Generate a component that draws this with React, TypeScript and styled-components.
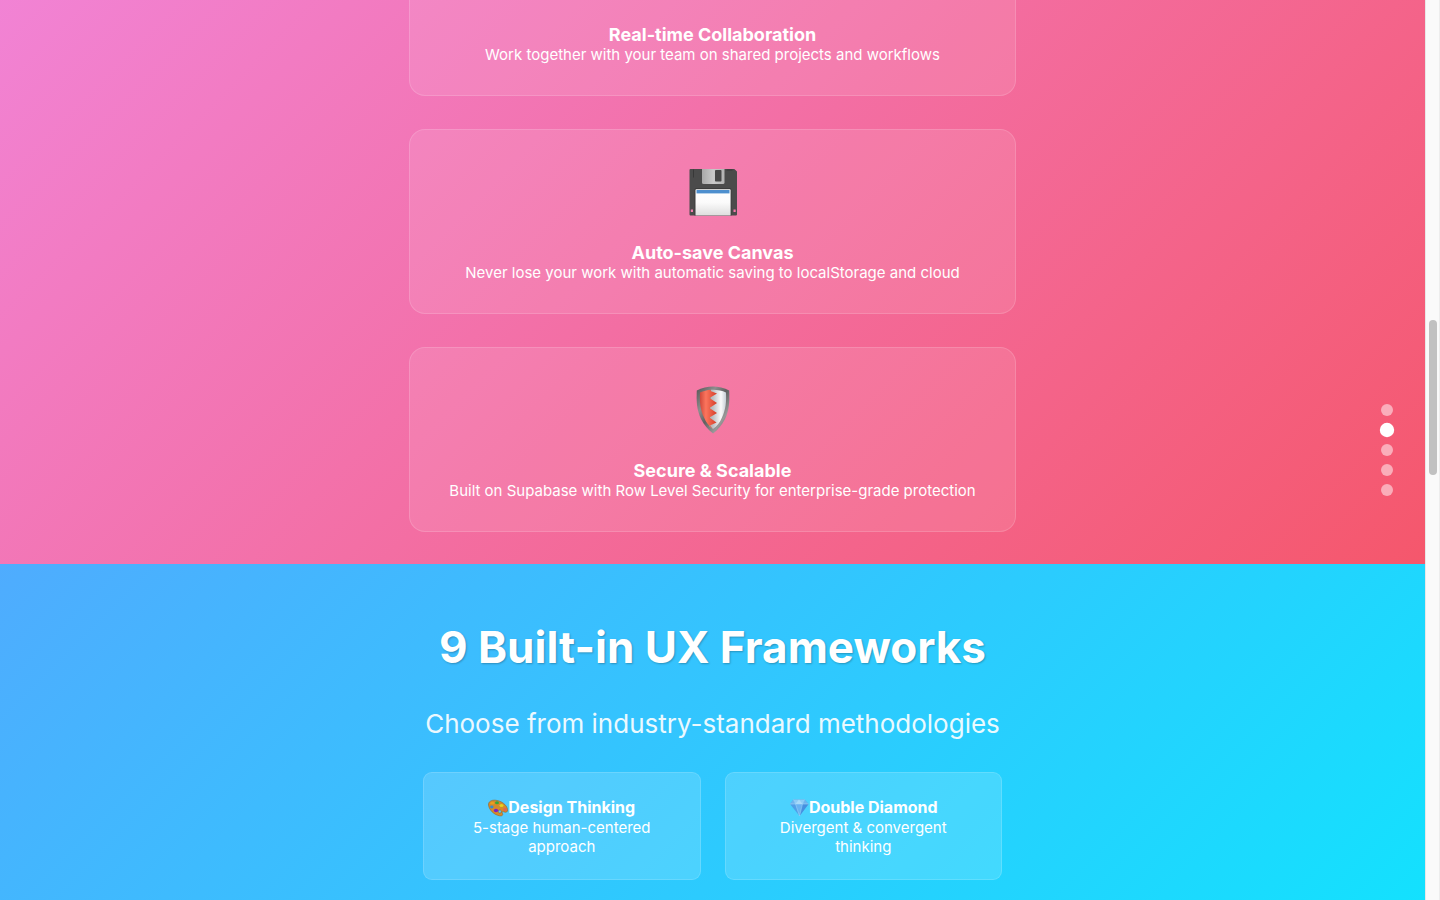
import React from "react";
import styled, { createGlobalStyle } from "styled-components";

const GlobalStyle = createGlobalStyle`
  *, *::before, *::after { box-sizing: border-box; }
  body {
    margin: 0;
    font-family: Inter, "Liberation Sans", sans-serif;
    font-size: 15px;
    color: #fff;
  }
  h2, h3, p { margin: 0; }
`;

const Page = styled.div`
  display: flex;
  min-height: 100vh;
`;

const Main = styled.main`
  flex: 1;
  min-width: 0;
  display: flex;
  flex-direction: column;
`;

const Features = styled.section`
  display: flex;
  flex-direction: column;
  align-items: center;
  gap: 33px;
  padding: 0 32px 32px;
  background: linear-gradient(135deg, #f093fb 0%, #f5576c 100%) bottom / 100% 1298px no-repeat;
`;

const FeatureCard = styled.article<{ $continued?: boolean }>`
  width: 100%;
  max-width: 607px;
  padding: ${(p) => (p.$continued ? "24px 32px 31px" : "32px 32px 31px")};
  text-align: center;
  background: rgba(255, 255, 255, 0.1);
  border: 1px solid rgba(255, 255, 255, 0.15);
  border-radius: 16px;
  ${(p) => p.$continued && "border-top: 0; border-radius: 0 0 16px 16px;"}
`;

const FeatureIcon = styled.div`
  display: flex;
  align-items: center;
  justify-content: center;
  height: 60px;
  margin-bottom: 20px;
`;

const FeatureTitle = styled.h3`
  font-size: 18px;
  line-height: 21px;
  font-weight: 700;
`;

const Text = styled.p`
  font-size: 15px;
  line-height: 19px;
`;

const Frameworks = styled.section`
  flex: 1;
  display: flex;
  flex-direction: column;
  align-items: center;
  padding: 54px 32px 20px;
  background: linear-gradient(135deg, #4facfe 0%, #00f2fe 100%) top / 100% 900px no-repeat;
`;

const Heading = styled.h2`
  font-size: 44px;
  line-height: 58px;
  font-weight: 700;
  text-align: center;
  text-shadow: 1px 1px 2px rgba(0, 0, 0, 0.25);
`;

const Lead = styled.p`
  margin-top: 30px;
  font-size: 26px;
  line-height: 36px;
  text-align: center;
  opacity: 0.9;
`;

const FrameworkGrid = styled.div`
  display: grid;
  grid-template-columns: 1fr 1fr;
  gap: 24px;
  width: 100%;
  max-width: 579px;
  margin-top: 30px;
`;

const FrameworkCard = styled.article`
  padding: 24px 32px 23px;
  text-align: center;
  background: rgba(255, 255, 255, 0.15);
  border: 1px solid rgba(255, 255, 255, 0.15);
  border-radius: 9px;
`;

const FrameworkTitle = styled.h3`
  display: flex;
  align-items: center;
  justify-content: center;
  font-size: 16px;
  line-height: 21px;
  font-weight: 700;
`;

const Dots = styled.nav`
  position: fixed;
  top: 50%;
  right: 47px;
  transform: translateY(-50%);
  display: flex;
  flex-direction: column;
  gap: 8px;
`;

const Dot = styled.button<{ $active?: boolean }>`
  width: 12px;
  height: 12px;
  padding: 0;
  border: 0;
  border-radius: 50%;
  cursor: pointer;
  background: ${(p) => (p.$active ? "#fff" : "rgba(255, 255, 255, 0.5)")};
  transform: ${(p) => (p.$active ? "scale(1.2)" : "none")};
`;

const ScrollTrack = styled.div`
  flex: none;
  width: 15px;
  padding: 320px 3px 0;
  background: #fafafa;
  border-left: 1px solid #e8e8e8;
  border-right: 1px solid #ededed;
`;

const ScrollThumb = styled.div`
  width: 8px;
  height: 155px;
  border-radius: 4px;
  background: #c1c1c1;
`;

const Floppy = () => (
  <svg width="48" height="48" viewBox="0 0 48 48" aria-hidden="true">
    <defs>
      <linearGradient id="shutter" x1="0" y1="0" x2="1" y2="0">
        <stop offset="0" stopColor="#a9a9a9" />
        <stop offset="0.5" stopColor="#c9c9c9" />
        <stop offset="1" stopColor="#b2b2b2" />
      </linearGradient>
      <linearGradient id="label" x1="0" y1="0" x2="0" y2="1">
        <stop offset="0" stopColor="#fff" />
        <stop offset="0.5" stopColor="#fbfbfb" />
        <stop offset="1" stopColor="#dedede" />
      </linearGradient>
    </defs>
    <path
      fillRule="evenodd"
      d="M1.500 1h43.800L48 3.500V46.500q0 1-1 1H1.500q-1 0-1-1V2q0-1 1-1zM1.800 41.500v2.500h2.200v-2.500zM44.500 41.500v2.500h2.200v-2.500z"
      fill="#4b4b4b"
    />
    <path d="M4.500 1.500v8M43.500 2h-6" stroke="#383838" fill="none" />
    <path d="M13 1h22.500v13.500q0 1.500-1.500 1.500H14.500q-1.500 0-1.500-1.500z" fill="url(#shutter)" />
    <rect x="26" y="2" width="6.500" height="11.500" rx="0.800" fill="#474747" />
    <path d="M5.500 47.500V22q0-2 2-2h33q2 0 2 2v25.500z" fill="#3c3c3c" />
    <path d="M6.500 47.500V22q0-.8.800-.8h33.500q.8 0 .8.800v25.500z" fill="url(#label)" />
    <rect x="7.500" y="22" width="33" height="3.400" fill="#4d8fce" />
  </svg>
);

const Shield = () => (
  <svg width="48" height="48" viewBox="0 0 48 48" aria-hidden="true">
    <defs>
      <linearGradient id="rim" x1="0" y1="0" x2="1" y2="1">
        <stop offset="0" stopColor="#555" />
        <stop offset="0.3" stopColor="#8e8e8e" />
        <stop offset="0.5" stopColor="#606060" />
        <stop offset="0.75" stopColor="#999" />
        <stop offset="1" stopColor="#484848" />
      </linearGradient>
      <linearGradient id="red" x1="0" y1="0" x2="1" y2="0">
        <stop offset="0" stopColor="#d0483b" />
        <stop offset="0.35" stopColor="#fb755d" />
        <stop offset="1" stopColor="#d63d27" />
      </linearGradient>
      <linearGradient id="silver" x1="0" y1="0" x2="1" y2="0">
        <stop offset="0" stopColor="#a9adb1" />
        <stop offset="0.25" stopColor="#bfc3c6" />
        <stop offset="0.7" stopColor="#fafafa" />
        <stop offset="1" stopColor="#c6ced5" />
      </linearGradient>
    </defs>
    <path
      d="M24 .5C29 .5 35.500 2 40.200 4.500 40.700 16 40.200 24 36 33 33 39 29 43.500 24 47.500 19 43.500 15 39 12 33 7.800 24 7.300 16 7.800 4.500 12.500 2 19 .5 24 .5z"
      fill="url(#rim)"
    />
    <path
      d="M22 3.700C28 3.500 33 4.500 37 6.500 37.400 16 37 23 33 31.500 31 36.500 28 40 24 43L20 40z"
      fill="url(#silver)"
    />
    <path
      d="M22 3.700C18 4 14.500 5 11 6.500 10.600 16 11 23 15 31.500 17 36.500 20 40 24 43L21 39.500 27.500 36.500 20.500 31.500 28 27 20.500 22 28 17 20.500 12 28 7.500 21.500 5z"
      fill="url(#red)"
    />
  </svg>
);

const Palette = () => (
  <svg width="20" height="20" viewBox="0 0 20 20" aria-hidden="true">
    <path
      fillRule="evenodd"
      d="M.5 7C.2 3.500 3.500 1.800 7.500 2.200 13 2.700 18.800 6.500 19.600 11.500 20 14 18 14.800 16.300 14 14.800 13.200 13.500 13.500 14.300 15 15.500 17.200 14 18.300 11.500 17.800 6 16.800 1 12 .5 7zM10.300 13a1.600 1.300 20 1 0 3 1 1.600 1.300 20 1 0-3-1z"
      fill="#d58a2b"
      stroke="#8c5920"
      strokeWidth="0.500"
    />
    <ellipse cx="4.300" cy="5.200" rx="1.900" ry="1.400" fill="#e8a020" />
    <ellipse cx="9" cy="4.800" rx="2" ry="1.500" fill="#35a83a" />
    <ellipse cx="13.500" cy="7.400" rx="2" ry="1.500" fill="#e6d21e" />
    <ellipse cx="17" cy="11.500" rx="1.700" ry="1.500" fill="#ed5b55" />
    <ellipse cx="3.800" cy="9" rx="1.700" ry="1.400" fill="#368bd0" />
    <ellipse cx="8" cy="12.500" rx="2.200" ry="1.700" fill="#7c20c7" />
  </svg>
);

const Gem = () => (
  <svg width="20" height="20" viewBox="0 0 20 20" aria-hidden="true">
    <path d="M4.500 1.500h11L19.500 6 10.500 18 1 6z" fill="#4f9fe8" />
    <path d="M4.500 1.500h11l-2 4.500h-7z" fill="#8ccbf6" />
    <path d="M4.500 1.500L1 6h5.500zM15.500 1.500l4 4.500h-6z" fill="#6eb4ee" />
    <path d="M6.500 6h7l-3 12z" fill="#68b2f2" />
    <path d="M6.500 6L10 1.500l3.500 4.500z" fill="#a8dafa" />
    <path d="M13.500 6h6l-9 12z" fill="#4590e0" />
    <path d="M4.500 1.500l2 4.500 4 12 3-12 2-4.500M1 6h18.500" fill="none" stroke="#a7dbfa" strokeWidth="0.500" />
  </svg>
);

const features = [
  {
    title: "Real-time Collaboration",
    text: "Work together with your team on shared projects and workflows",
  },
  {
    title: "Auto-save Canvas",
    text: "Never lose your work with automatic saving to localStorage and cloud",
    icon: <Floppy />,
  },
  {
    title: "Secure & Scalable",
    text: "Built on Supabase with Row Level Security for enterprise-grade protection",
    icon: <Shield />,
  },
];

const frameworks = [
  { title: "Design Thinking", text: "5-stage human-centered approach", icon: <Palette /> },
  { title: "Double Diamond", text: "Divergent & convergent thinking", icon: <Gem /> },
];

export default function App() {
  return (
    <>
      <GlobalStyle />
      <Page>
        <Main>
          <Features>
            {features.map((f) => (
              <FeatureCard key={f.title} $continued={!f.icon}>
                {f.icon && <FeatureIcon>{f.icon}</FeatureIcon>}
                <FeatureTitle>{f.title}</FeatureTitle>
                <Text>{f.text}</Text>
              </FeatureCard>
            ))}
          </Features>
          <Frameworks>
            <Heading>9 Built-in UX Frameworks</Heading>
            <Lead>Choose from industry-standard methodologies</Lead>
            <FrameworkGrid>
              {frameworks.map((f) => (
                <FrameworkCard key={f.title}>
                  <FrameworkTitle>
                    {f.icon}
                    {f.title}
                  </FrameworkTitle>
                  <Text>{f.text}</Text>
                </FrameworkCard>
              ))}
            </FrameworkGrid>
          </Frameworks>
        </Main>
        <ScrollTrack>
          <ScrollThumb />
        </ScrollTrack>
      </Page>
      <Dots aria-label="Sections">
        {[1, 2, 3, 4, 5].map((n) => (
          <Dot key={n} type="button" aria-label={`Section ${n}`} $active={n === 2} />
        ))}
      </Dots>
    </>
  );
}
